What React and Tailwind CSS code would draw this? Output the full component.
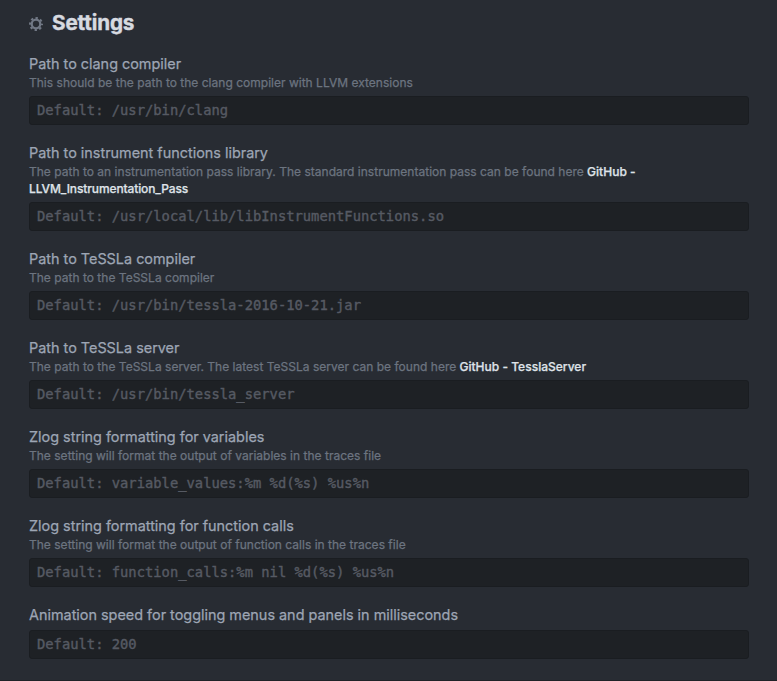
const settings = [
  {
    title: "Path to clang compiler",
    description: "This should be the path to the clang compiler with LLVM extensions",
    placeholder: "Default: /usr/bin/clang",
  },
  {
    title: "Path to instrument functions library",
    description:
      "The path to an instrumentation pass library. The standard instrumentation pass can be found here",
    link: ["GitHub -", "LLVM_Instrumentation_Pass"],
    placeholder: "Default: /usr/local/lib/libInstrumentFunctions.so",
  },
  {
    title: "Path to TeSSLa compiler",
    description: "The path to the TeSSLa compiler",
    placeholder: "Default: /usr/bin/tessla-2016-10-21.jar",
  },
  {
    title: "Path to TeSSLa server",
    description: "The path to the TeSSLa server. The latest TeSSLa server can be found here",
    link: ["GitHub - TesslaServer"],
    placeholder: "Default: /usr/bin/tessla_server",
  },
  {
    title: "Zlog string formatting for variables",
    description: "The setting will format the output of variables in the traces file",
    placeholder: "Default: variable_values:%m %d(%s) %us%n",
  },
  {
    title: "Zlog string formatting for function calls",
    description: "The setting will format the output of function calls in the traces file",
    placeholder: "Default: function_calls:%m nil %d(%s) %us%n",
  },
  {
    title: "Animation speed for toggling menus and panels in milliseconds",
    placeholder: "Default: 200",
  },
];

function GearIcon() {
  return (
    <svg className="mt-[2px] h-4 w-[14px] shrink-0" viewBox="0 0 14 16" fill="none" stroke="#717885">
      <circle cx="7" cy="8" r="4.3" strokeWidth="2.3" />
      <circle cx="7" cy="8" r="6" strokeWidth="2" strokeDasharray="2.356 2.356" strokeDashoffset="1.178" />
    </svg>
  );
}

function Setting({ title, description, link, placeholder }) {
  return (
    <div className="flex flex-col">
      <label className="h-5 whitespace-nowrap text-[14.4px] leading-5 tracking-[0.005px] text-[#9da5b4] [-webkit-text-stroke:0.25px_#9da5b4]">
        {title}
      </label>
      {description && (
        <p className="whitespace-nowrap text-[12px] leading-[17px] tracking-[0.015px] text-[#6c7480] [-webkit-text-stroke:0.25px_#6c7480]">
          {description}
          {link && (
            <a className="font-medium text-[#dfe2e8] [-webkit-text-stroke:0.25px_#dfe2e8]">
              {" "}
              {link[0]}
              {link[1] && <br />}
              <span className="tracking-[-0.11px]">{link[1]}</span>
            </a>
          )}
        </p>
      )}
      <div className="mt-[5px] h-[29px] whitespace-pre rounded-[3px] border border-[#1a1d21] bg-[#1e2125] pl-[7px] font-['DejaVu_Sans_Mono',monospace] text-[13.8px] leading-[27px] text-[#565a63] [-webkit-text-stroke:0.4px_#565a63]">
        {placeholder}
      </div>
    </div>
  );
}

export default function App() {
  return (
    <main className="h-[681px] w-[777px] overflow-hidden border-b border-[#1f2227] bg-[#282c33] pl-[29px] pr-[28px] pt-[8px] font-['Inter',sans-serif]">
      <h1 className="flex h-[30px] items-center gap-[9px] text-[20.7px] font-bold tracking-[-0.15px] text-[#d7dae0] [-webkit-text-stroke:0.4px_#d7dae0]">
        <GearIcon />
        Settings
      </h1>
      <div className="mt-4 flex flex-col gap-[18px]">
        {settings.map((s) => (
          <Setting key={s.title} {...s} />
        ))}
      </div>
    </main>
  );
}
